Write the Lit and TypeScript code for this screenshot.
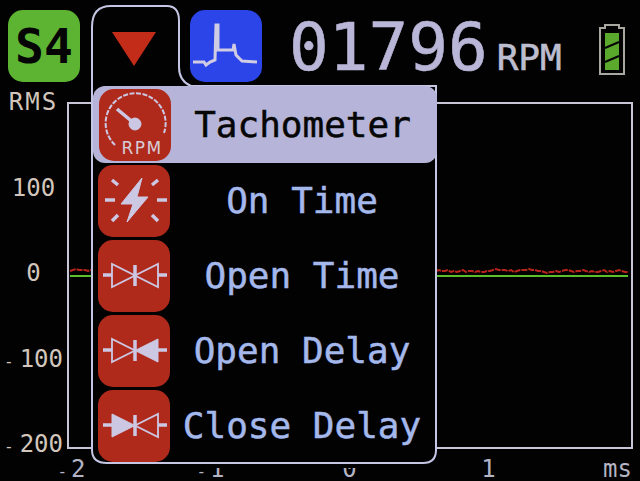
import { LitElement, css, html, svg } from 'lit'
import { customElement } from 'lit/decorators.js'

// small noise on the red trace, one value per 3px step
const NOISE = [0, -1, -2, -1, -1, -1, 0, -1, 1, 0, -1, -1, -1, -2, -1, -1, 0, 0, 1, 2, 1, 1, 0, 1, 0, -1, -1, 0, 1, 0, 0, -1, 0, 1, 0, 1, 1, 0, -1, 1, 0, 1, 0, -1, 0, 1, 1, 2, 0, -1, 1, 0, 0, -1, 0, 0, -1, 1, 0, 1, 0, -1, 1, 0, 0, 1, 0, 1, 1, 0]

const redTrace = (from: number, to: number) => {
  const points: string[] = []
  for (let x = from, i = 0; x <= to; x += 3, i++) {
    points.push(`${x},${271 + NOISE[i % NOISE.length]}`)
  }
  return points.join(' ')
}

const valve = (leftFilled: boolean, rightFilled: boolean) => svg`
  <path class="line" d="M5 35H14M60 35H69" />
  <path class=${leftFilled ? 'solid' : 'thin'} d="M14 24V47L37 35.5Z" />
  <path class=${rightFilled ? 'solid' : 'thin'} d="M60 24V47L37 35.5Z" />
  <path class="line" d="M37 25V46" />
`

const gauge = svg`
  <path class="dash" d="M16 56A30 30 0 1 1 65 44" />
  <path class="line" d="M18 20L36 35" />
  <circle class="fill" cx="36" cy="35" r="6" />
  <text class="icon-label" x="43" y="65" text-anchor="middle">RPM</text>
`

const bolt = svg`
  <path class="fill" d="M44 13L23 39H35L29 57L50 32H39Z" />
  <path class="line" d="M14 15L20 20M60 15L54 20M7 35H17M59 35H69M14 56L20 50M60 56L54 50" />
`

const MENU = [
  { label: 'Tachometer', icon: gauge },
  { label: 'On Time', icon: bolt },
  { label: 'Open Time', icon: valve(false, false) },
  { label: 'Open Delay', icon: valve(false, true) },
  { label: 'Close Delay', icon: valve(true, false) },
]

@customElement('app-root')
export class AppRoot extends LitElement {
  static styles = css`
    :host {
      display: block;
      position: relative;
      width: 640px;
      height: 481px;
      overflow: hidden;
      background: #020202;
      font-family: 'DejaVu Sans Mono', 'Liberation Mono', monospace;
      color: #cdc8d0;
    }

    .header {
      display: flex;
      align-items: flex-start;
      height: 90px;
      padding: 10px 0 0 8px;
      box-sizing: border-box;
    }

    .tile {
      width: 72px;
      height: 72px;
      flex: none;
      border-radius: 15px;
      display: flex;
      align-items: center;
      justify-content: center;
    }

    .tile svg {
      display: block;
    }

    .sensor {
      background: #5cb432;
      color: #050505;
      font-size: 48px;
      font-weight: 700;
    }

    .wave {
      margin-left: 110px;
      background: #2b45e8;
    }

    .reading {
      display: flex;
      align-items: baseline;
      margin: 3px 0 0 27px;
      color: #b9b6d8;
      line-height: 70px;
      -webkit-text-stroke: 0.6px currentColor;
    }

    .value {
      font-size: 66px;
    }

    .unit {
      font-size: 36px;
      margin-left: 9px;
      color: #bdbdd0;
    }

    .battery {
      margin: 14px 0 0 36px;
      flex: none;
    }

    .chart {
      display: grid;
      grid-template-columns: 67px 566px;
      height: 366px;
    }

    .y-axis {
      display: flex;
      flex-direction: column;
      justify-content: space-between;
      align-items: center;
      font-size: 24px;
      line-height: 24px;
      color: #d2c6bc;
    }

    .y-axis .title {
      letter-spacing: 2px;
    }

    .minus {
      font-style: normal;
      font-size: 16px;
      line-height: 0;
      margin-right: 6px;
    }

    .plot {
      margin-top: 12px;
      height: 347px;
      box-sizing: border-box;
      border: 2px solid #c6c6d6;
    }

    .plot svg {
      display: block;
      width: 100%;
      height: 100%;
    }

    .x-axis {
      display: grid;
      grid-template-columns: repeat(4, 139px) 1fr;
      padding: 1px 8px 0 2px;
      font-size: 24px;
      line-height: 24px;
      text-align: center;
      color: #b4b4c4;
    }

    .x-axis .minus {
      margin-right: 4px;
    }

    .x-axis .end {
      text-align: right;
    }

    .popover {
      position: absolute;
      left: 91px;
      top: 5px;
      width: 348px;
      height: 460px;
    }

    /* the menu wipes the axis labels just below its bottom edge */
    .popover::before {
      content: '';
      position: absolute;
      left: 2px;
      right: 2px;
      top: 446px;
      height: 17px;
      background: #020202;
    }

    .outline {
      position: absolute;
      inset: 0;
    }

    .outline path {
      fill: #020202;
      stroke: #c4c6e4;
      stroke-width: 2;
    }

    .arrow {
      position: absolute;
      left: 21px;
      top: 27px;
    }

    .arrow path {
      fill: #c42c1a;
    }

    .menu {
      position: absolute;
      left: 2px;
      top: 81px;
      width: 344px;
      display: flex;
      flex-direction: column;
    }

    .row {
      display: flex;
      align-items: center;
      height: 75px;
      padding-left: 5px;
      box-sizing: border-box;
      color: #a4b8ec;
      font-size: 36px;
      -webkit-text-stroke: 0.5px currentColor;
    }

    .row.active {
      height: 77px;
      padding-left: 6px;
      border-radius: 12px;
      background: #b6b5d9;
      color: #060606;
    }

    .row .tile {
      background: #b02a1c;
      -webkit-text-stroke: 0;
    }

    .row span {
      flex: 1;
      text-align: center;
      padding-right: 3px;
      white-space: pre;
    }

    .line,
    .thin,
    .dash,
    .solid,
    .fill {
      stroke: #ccc8e4;
      fill: none;
    }

    .line {
      stroke-width: 3.5;
    }

    .thin {
      stroke-width: 1.8;
    }

    .dash {
      stroke-width: 2;
      stroke-dasharray: 5 1.5;
    }

    .solid,
    .fill {
      fill: #ccc8e4;
      stroke-width: 1;
    }

    .icon-label {
      font-family: 'DejaVu Sans', sans-serif;
      font-size: 17px;
      letter-spacing: 1.5px;
      fill: #d6cdd8;
    }

    .trace-red {
      fill: none;
      stroke: #b8241a;
      stroke-width: 2;
      stroke-dasharray: 6 1;
    }

    .trace-green {
      stroke: #5cc02c;
      stroke-width: 2;
    }

    .wave-line {
      fill: none;
      stroke: #d0cce4;
      stroke-width: 3;
    }

    .cell {
      fill: #5aa82c;
    }

    .bolt-cut {
      fill: none;
      stroke: #050505;
      stroke-width: 2;
    }

    .shell {
      fill: none;
      stroke: #a8a8a0;
      stroke-width: 2;
    }
  `

  private renderHeader() {
    return html`
      <div class="header">
        <div class="tile sensor">S4</div>
        <div class="tile wave">
          <svg width="72" height="72" viewBox="0 0 72 72">
            <path
              class="wave-line"
              d="M3 52H14L16 55L20 52L25 50L26 15H28L28 40H43L44 34L46 45L52 51L67 52"
            />
          </svg>
        </div>
        <div class="reading">
          <span class="value">01796</span>
          <span class="unit">RPM</span>
        </div>
        <svg class="battery" width="28" height="52" viewBox="0 0 28 52">
          <path class="shell" d="M2 4H7V1H21V4H26V50H2Z" />
          <rect class="cell" x="7" y="9" width="14" height="37" />
          <path class="bolt-cut" d="M7 24L21 18M7 38L21 32" />
        </svg>
      </div>
    `
  }

  private renderChart() {
    return html`
      <div class="chart">
        <div class="y-axis">
          <span class="title">RMS</span>
          <span>100</span>
          <span>0</span>
          <span><i class="minus">-</i>100</span>
          <span><i class="minus">-</i>200</span>
        </div>
        <div class="plot">
          <svg viewBox="69 104 562 343" preserveAspectRatio="none">
            <polyline class="trace-red" points=${redTrace(70, 628)} />
            <line class="trace-green" x1="70" y1="276" x2="628" y2="276" />
          </svg>
        </div>
      </div>
      <div class="x-axis">
        <span><i class="minus">-</i>2</span>
        <span><i class="minus">-</i>1</span>
        <span>0</span>
        <span>1</span>
        <span class="end">ms</span>
      </div>
    `
  }

  private renderMenu() {
    return html`
      <div class="popover">
        <svg class="outline" width="348" height="460" viewBox="0 0 348 460">
          <path
            d="M1 445V22Q1 1 20 1H76Q88 1 88 16V62Q88 76 100 81H345V445Q345 458 332 458H16Q1 458 1 445Z"
          />
        </svg>
        <svg class="arrow" width="44" height="34" viewBox="0 0 44 34">
          <path d="M0 0H44L22 34Z" />
        </svg>
        <div class="menu">
          ${MENU.map(
            (item, i) => html`
              <div class="row ${i === 0 ? 'active' : ''}">
                <div class="tile">
                  <svg width="72" height="72" viewBox="0 0 72 72">${item.icon}</svg>
                </div>
                <span>${item.label}</span>
              </div>
            `,
          )}
        </div>
      </div>
    `
  }

  render() {
    return html`${this.renderHeader()}${this.renderChart()}${this.renderMenu()}`
  }
}
